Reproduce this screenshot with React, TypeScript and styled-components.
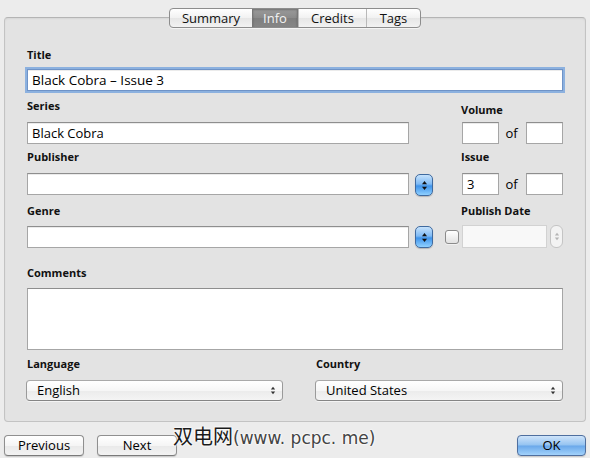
import React from 'react';
import styled, { createGlobalStyle, css } from 'styled-components';

const UI_FONT = '"Lucida Grande", "Open Sans", "DejaVu Sans", sans-serif';

const GlobalStyle = createGlobalStyle`
  html, body {
    margin: 0;
    padding: 0;
    background: #ececec;
  }
  * {
    box-sizing: border-box;
  }
`;

const TABS = ['Summary', 'Info', 'Credits', 'Tags'];
const TAB_WIDTHS = [82, 46, 68, 54];

function UpDownArrows({ color = '#222', width = 7 }: { color?: string; width?: number }) {
  return (
    <svg width={width} height="11" viewBox="0 0 7 11">
      <path d="M3.5 1 L6 4.2 L1 4.2 Z" fill={color} />
      <path d="M3.5 10 L6 6.8 L1 6.8 Z" fill={color} />
    </svg>
  );
}

export default function App() {
  return (
    <>
      <GlobalStyle />
      <Window>
        <TabStrip>
          <Segmented>
            {TABS.map((tab, idx) => (
              <Tab key={tab} $active={tab === 'Info'} style={{ width: TAB_WIDTHS[idx] }}>
                {tab}
              </Tab>
            ))}
          </Segmented>
        </TabStrip>

        <Panel>
          <FormGrid>
            <Label $col="1 / -1">Title</Label>
            <TextField $col="1 / -1" $top={8} $focused readOnly defaultValue="Black Cobra – Issue 3" />

            <Label $col="1" $top={8}>Series</Label>
            <Label $col="4" $top={12}>Volume</Label>

            <TextField $col="1" $top={6} readOnly defaultValue="Black Cobra" />
            <NumberPair $top={6}>
              <SmallField readOnly defaultValue="" />
              <Of>of</Of>
              <SmallField readOnly defaultValue="" />
            </NumberPair>

            <Label $col="1" $top={6}>Publisher</Label>
            <Label $col="4" $top={6}>Issue</Label>

            <TextField $col="1" $top={10} readOnly defaultValue="" />
            <AquaStepper $top={11}>
              <UpDownArrows color="#111" />
            </AquaStepper>
            <NumberPair $top={10}>
              <SmallField readOnly defaultValue="3" />
              <Of>of</Of>
              <SmallField readOnly defaultValue="" />
            </NumberPair>

            <Label $col="1" $top={8}>Genre</Label>
            <Label $col="4" $top={8}>Publish Date</Label>

            <TextField $col="1" $top={9} readOnly defaultValue="" />
            <AquaStepper $top={9}>
              <UpDownArrows color="#111" />
            </AquaStepper>
            <CheckBox />
            <DateGroup>
              <DateField readOnly disabled defaultValue="" />
              <GrayStepper>
                <UpDownArrows color="#b5b5b5" width={6} />
              </GrayStepper>
            </DateGroup>

            <Label $col="1 / -1" $top={18}>Comments</Label>
            <CommentsBox />
          </FormGrid>

          <BottomGrid>
            <Label $top={7}>Language</Label>
            <Label $top={7}>Country</Label>
            <PopUp>
              <span>English</span>
              <UpDownArrows color="#333" width={6} />
            </PopUp>
            <PopUp>
              <span>United States</span>
              <UpDownArrows color="#333" width={6} />
            </PopUp>
          </BottomGrid>
        </Panel>

        <Footer>
          <NavGroup>
            <PushButton>Previous</PushButton>
            <PushButton>Next</PushButton>
          </NavGroup>
          <PushButton $default>OK</PushButton>
        </Footer>

        <Watermark>
          双电网<WatermarkLatin>(www. pcpc. me)</WatermarkLatin>
        </Watermark>
      </Window>
    </>
  );
}

const Window = styled.div`
  position: relative;
  width: 590px;
  height: 458px;
  overflow: hidden;
  display: flex;
  flex-direction: column;
  background: #ececec;
  font-family: ${UI_FONT};
  color: #000;
`;

const TabStrip = styled.div`
  position: relative;
  z-index: 1;
  display: flex;
  justify-content: center;
  margin-top: 8px;
`;

const Segmented = styled.div`
  display: flex;
  height: 20px;
  border: 1px solid #8d8d8d;
  border-radius: 4px;
  overflow: hidden;
  background: linear-gradient(#ffffff, #f1f1f1 50%, #e6e6e6 51%, #f2f2f2);
  box-shadow: 0 1px 0 rgba(255, 255, 255, 0.6);
`;

const Tab = styled.div<{ $active?: boolean }>`
  display: flex;
  align-items: center;
  justify-content: center;
  font-size: 13px;
  line-height: 18px;
  color: #111;
  & + & {
    border-left: 1px solid #b9b9b9;
  }

  ${(props) => props.$active && css`
    background: linear-gradient(#9a9a9a, #8a8a8a 50%, #7e7e7e 51%, #868686);
    color: #f4f4f4;
    border-left-color: #777 !important;
    border-right: 1px solid #777;
    box-shadow: inset 0 1px 2px rgba(0, 0, 0, 0.25);
  `}
`;

const Panel = styled.div`
  margin: -11px 4px 0;
  height: 405px;
  padding: 30px 22px 0 22px;
  border: 1px solid #c3c3c3;
  border-top-color: #b4b4b4;
  border-radius: 4px;
  background: #e3e3e3;
  box-shadow: inset 0 1px 2px rgba(0, 0, 0, 0.06);
`;

const FormGrid = styled.div`
  display: grid;
  grid-template-columns: 382px 24px 28px 102px;
  align-items: start;
`;

const Label = styled.label<{ $top?: number; $col?: string }>`
  grid-column: ${(props) => props.$col ?? 'auto'};
  margin-top: ${(props) => props.$top ?? 0}px;
  font-size: 11px;
  line-height: 13px;
  font-weight: bold;
  color: #111;
`;

const fieldBase = css`
  height: 22px;
  padding: 0 4px;
  border: 1px solid #a6a6a6;
  border-top-color: #8e8e8e;
  background: #fff;
  font-family: ${UI_FONT};
  font-size: 13px;
  color: #000;
  outline: none;
  box-shadow: inset 0 1px 0 rgba(0, 0, 0, 0.08);
`;

const TextField = styled.input<{ $top?: number; $col?: string; $focused?: boolean }>`
  ${fieldBase};
  grid-column: ${(props) => props.$col ?? 'auto'};
  margin-top: ${(props) => props.$top ?? 0}px;
  width: 100%;

  ${(props) => props.$focused && css`
    border-color: #6f93c7;
    font-size: 13.5px;
    box-shadow: 0 0 0 2px rgba(125, 168, 222, 0.85), inset 0 1px 0 rgba(0, 0, 0, 0.08);
  `}
`;

const NumberPair = styled.div<{ $top?: number }>`
  grid-column: 4;
  margin-top: ${(props) => props.$top ?? 0}px;
  display: flex;
  align-items: center;
  justify-content: space-between;
  padding-left: 1px;
`;

const SmallField = styled.input`
  ${fieldBase};
  width: 37px;
`;

const Of = styled.span`
  font-size: 13px;
  line-height: 22px;
  padding-right: 2px;
`;

const AquaStepper = styled.div<{ $top?: number }>`
  grid-column: 2;
  justify-self: end;
  margin-top: ${(props) => props.$top ?? 0}px;
  width: 18px;
  height: 22px;
  display: flex;
  align-items: center;
  justify-content: center;
  border: 1px solid #3f6a9f;
  border-radius: 5px;
  background: linear-gradient(#c6e2fc, #7fbaf4 45%, #3f93ea 55%, #8fd0ff);
  box-shadow: 0 1px 1px rgba(0, 0, 0, 0.2);
`;

const CheckBox = styled.div`
  grid-column: 3;
  justify-self: end;
  margin: 13px 2px 0 0;
  width: 14px;
  height: 14px;
  border: 1px solid #8b8b8b;
  border-radius: 3px;
  background: linear-gradient(#ffffff, #f0f0f0 50%, #e2e2e2);
  box-shadow: 0 1px 0 rgba(255, 255, 255, 0.5);
`;

const DateGroup = styled.div`
  grid-column: 4;
  margin-top: 8px;
  display: flex;
  gap: 3px;
  padding-left: 1px;
`;

const DateField = styled.input`
  ${fieldBase};
  flex: 1;
  min-width: 0;
  height: 23px;
  border-color: #d2d2d2;
  background: #f8f8f8;
  box-shadow: none;
`;

const GrayStepper = styled.div`
  width: 13px;
  height: 23px;
  display: flex;
  align-items: center;
  justify-content: center;
  border: 1px solid #c4c4c4;
  border-radius: 6px;
  background: #f3f3f3;
`;

const CommentsBox = styled.div`
  grid-column: 1 / -1;
  margin-top: 9px;
  height: 62px;
  border: 1px solid #a6a6a6;
  border-top-color: #8e8e8e;
  background: #fff;
`;

const BottomGrid = styled.div`
  display: grid;
  grid-template-columns: 257px 248px;
  column-gap: 32px;
  margin-left: -1px;
  align-items: start;

  & > label {
    padding-left: 1px;
  }
`;

const PopUp = styled.div`
  margin-top: 10px;
  height: 21px;
  display: flex;
  align-items: center;
  justify-content: space-between;
  padding: 0 6px 0 10px;
  border: 1px solid #9a9a9a;
  border-top-color: #a9a9a9;
  border-bottom-color: #858585;
  border-radius: 4px;
  background: linear-gradient(#ffffff, #f6f6f6 50%, #ebebeb 51%, #f4f4f4);
  box-shadow: 0 1px 0 rgba(255, 255, 255, 0.6);
  font-size: 13px;
  line-height: 19px;
`;

const Footer = styled.div`
  display: flex;
  justify-content: space-between;
  margin-top: 13px;
  padding: 0 4px;
`;

const NavGroup = styled.div`
  display: flex;
  gap: 13px;
`;

const PushButton = styled.button<{ $default?: boolean }>`
  width: ${(props) => (props.$default ? 69 : 80)}px;
  height: 21px;
  padding: 0;
  border: 1px solid #8f8f8f;
  border-bottom-color: #7a7a7a;
  border-radius: 4px;
  background: linear-gradient(#ffffff, #f5f5f5 50%, #e9e9e9 51%, #f3f3f3);
  box-shadow: 0 1px 1px rgba(0, 0, 0, 0.15);
  font-family: ${UI_FONT};
  font-size: 13px;
  line-height: 19px;
  color: #000;

  ${(props) => props.$default && css`
    border-color: #4f6f9f;
    background: linear-gradient(#cfe4fa, #94c3f1 48%, #6aa8ea 52%, #a2d2fb);
  `}
`;

const Watermark = styled.div`
  position: absolute;
  left: 173px;
  top: 424px;
  font-family: "Noto Sans CJK SC", sans-serif;
  font-size: 20px;
  line-height: 24px;
  color: #1a1a1a;
  white-space: nowrap;
  text-shadow: 0 0 2px #fff, 0 0 2px #fff, 0 0 3px #fff;
`;

const WatermarkLatin = styled.span`
  font-family: "DejaVu Sans", sans-serif;
  font-size: 17px;
  color: #444;
`;
